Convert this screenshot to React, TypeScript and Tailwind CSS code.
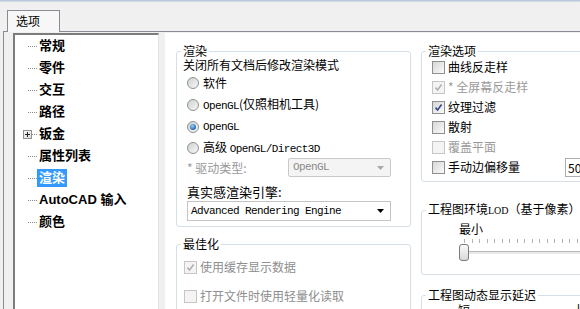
import React from "react";

const mono = "font-['Liberation_Mono',monospace] text-[11px] tracking-[-0.6px]";

function Radio({ checked }: { checked?: boolean }) {
  return (
    <span className="w-[12px] h-[12px] rounded-full border border-[#8e8f8f] bg-linear-to-br from-[#cfd0d0] to-[#f8f8f8] flex items-center justify-center shrink-0">
      {checked && (
        <span className="w-[6px] h-[6px] rounded-full bg-[radial-gradient(circle_at_40%_35%,#9fd0f7,#1b5ea8_75%)]" />
      )}
    </span>
  );
}

function Check({ checked, disabled }: { checked?: boolean; disabled?: boolean }) {
  return (
    <span
      className={`w-[13px] h-[13px] border flex items-center justify-center shrink-0 ${
        disabled
          ? "border-[#c6c6c6] bg-[#f4f4f4]"
          : "border-[#8e8f8f] bg-linear-to-br from-[#d6d6d6] to-[#fbfbfb]"
      }`}
    >
      {checked && (
        <svg width="9" height="9" viewBox="0 0 9 9">
          <path
            d="M1.5 4.6 L3.6 7 L7.6 1.6"
            stroke={disabled ? "#b0b0b0" : "#34488a"}
            strokeWidth="1.6"
            fill="none"
          />
        </svg>
      )}
    </span>
  );
}

const treeItems: { t: string; plus?: boolean; sel?: boolean }[] = [
  { t: "常规" },
  { t: "零件" },
  { t: "交互" },
  { t: "路径" },
  { t: "钣金", plus: true },
  { t: "属性列表" },
  { t: "渲染", sel: true },
  { t: "AutoCAD 输入" },
  { t: "颜色" },
];

function Tree() {
  return (
    <div className="w-[146px] shrink-0 bg-white border-t-2 border-l-2 border-[#7c7c7c] border-r border-r-[#e3e3e3] font-['Liberation_Sans','Noto_Sans_CJK_SC',sans-serif] font-bold text-[13px]">
      {treeItems.map((it) => (
        <div key={it.t} className="h-[22px] flex items-center">
          {it.plus ? (
            <>
              <span className="ml-[8px] w-[9px] h-[9px] border border-[#919191] bg-linear-to-br from-[#f4f4f4] to-[#dedede] flex items-center justify-center">
                <svg width="7" height="7" viewBox="0 0 7 7">
                  <path d="M1 3.5h5M3.5 1v5" stroke="#222" strokeWidth="1" />
                </svg>
              </span>
              <span className="w-[5px] border-t border-dotted border-[#8a8a8a]" />
            </>
          ) : (
            <span className="ml-[13px] w-[9px] border-t border-dotted border-[#8a8a8a]" />
          )}
          <span
            className={`px-[2px] h-[18px] leading-[18px] ${
              it.sel ? "bg-[#3399ff] text-white" : "text-black"
            }`}
          >
            {it.t}
          </span>
        </div>
      ))}
    </div>
  );
}

function Legend({ children }: { children: React.ReactNode }) {
  return (
    <legend className="ml-[4px] px-[2px] leading-[14px] text-[12px] whitespace-nowrap">{children}</legend>
  );
}

function LeftColumn() {
  return (
    <div className="w-[235px] shrink-0 flex flex-col">
      <fieldset className="mt-[11px] border border-[#d5dfe5] rounded-[3px] min-w-0">
        <Legend>渲染</Legend>
        <div className="pl-[6px] pb-[5px] flex flex-col">
          <div className="h-[14px] leading-[14px]">关闭所有文档后修改渲染模式</div>
          <div className="h-[22px] flex items-center pl-[4px] gap-[4px]">
            <Radio />
            <span>软件</span>
          </div>
          <div className="h-[22px] flex items-center pl-[4px] gap-[4px]">
            <Radio />
            <span>
              <span className={mono}>OpenGL</span>(仅照相机工具)
            </span>
          </div>
          <div className="h-[22px] flex items-center pl-[4px] gap-[4px]">
            <Radio checked />
            <span className={mono}>OpenGL</span>
          </div>
          <div className="h-[20px] flex items-center pl-[4px] gap-[4px]">
            <Radio />
            <span>
              高级 <span className={mono}>OpenGL/Direct3D</span>
            </span>
          </div>
          <div className="h-[19px] flex items-center pl-[4px]">
            <span className="w-[101px] text-[#9a9a9a]">* 驱动类型:</span>
            <div className="w-[103px] h-[19px] border border-[#c9c9c9] rounded-[2px] bg-[#f4f4f4] flex items-center pl-[4px] pr-[6px] text-[#8a8a8a]">
              <span className={mono}>OpenGL</span>
              <svg className="ml-auto" width="7" height="4" viewBox="0 0 7 4">
                <path d="M0 0h7L3.5 4z" fill="#a8a8a8" />
              </svg>
            </div>
          </div>
          <div className="mt-[7px] h-[16px] leading-[16px] text-[13px] pl-[4px]">真实感渲染引擎:</div>
          <div className="mt-[1px] ml-[4px] w-[204px] h-[20px] border border-[#c4c4c4] bg-white flex items-center pl-[3px] pr-[6px]">
            <span className={mono}>Advanced Rendering Engine</span>
            <svg className="ml-auto" width="7" height="4" viewBox="0 0 7 4">
              <path d="M0 0h7L3.5 4z" fill="#000" />
            </svg>
          </div>
        </div>
      </fieldset>

      <fieldset className="mt-[10px] border border-[#d5dfe5] rounded-[3px] min-w-0">
        <Legend>最佳化</Legend>
        <div className="pl-[7px] pb-[30px] flex flex-col">
          <div className="mt-[6px] h-[20px] flex items-center gap-[3px] text-[#8e8e8e]">
            <Check checked disabled />
            <span>使用缓存显示数据</span>
          </div>
          <div className="mt-[9px] h-[20px] flex items-center gap-[3px] text-[#8e8e8e]">
            <Check disabled />
            <span>打开文件时使用轻量化读取</span>
          </div>
        </div>
      </fieldset>
    </div>
  );
}

const ticks = Array.from({ length: 16 }, (_, i) => i);

function RightColumn() {
  return (
    <div className="w-[185px] shrink-0 flex flex-col">
      <fieldset className="mt-[11px] border border-[#d5dfe5] rounded-[3px] min-w-0">
        <Legend>渲染选项</Legend>
        <div className="pl-[10px] pb-[4px] flex flex-col">
          <div className="-mt-[1px] h-[20px] flex items-center gap-[3px]">
            <Check />
            <span>曲线反走样</span>
          </div>
          <div className="h-[20px] flex items-center gap-[3px] text-[#9a9a9a]">
            <Check checked disabled />
            <span>* 全屏幕反走样</span>
          </div>
          <div className="h-[20px] flex items-center gap-[3px]">
            <Check checked />
            <span>纹理过滤</span>
          </div>
          <div className="h-[20px] flex items-center gap-[3px]">
            <Check />
            <span>散射</span>
          </div>
          <div className="h-[20px] flex items-center gap-[3px] text-[#9a9a9a]">
            <Check disabled />
            <span>覆盖平面</span>
          </div>
          <div className="h-[20px] flex items-center gap-[3px]">
            <Check />
            <span className="w-[114px] shrink-0">手动边偏移量</span>
            <div className="w-[30px] h-[19px] shrink-0 border border-[#abadb3] bg-white pl-[2px] leading-[17px]">50</div>
          </div>
        </div>
      </fieldset>

      <fieldset className="mt-[20px] border border-[#d5dfe5] rounded-[3px] min-w-0">
        <Legend>
          工程图环境<span className="font-['Liberation_Serif',serif] text-[10px]">LOD</span>（基于像素）
        </Legend>
        <div className="pl-[37px] pb-[13px] flex flex-col">
          <div className="mt-[3px] h-[16px] leading-[16px]">最小</div>
          <div className="mt-[2px] h-[5px] flex items-start gap-[6.5px] pl-[5px]">
            {ticks.map((i) => (
              <span key={i} className="w-[1px] h-[4px] bg-[#b4b4b4] shrink-0" />
            ))}
          </div>
          <div className="relative h-[17px]">
            <div className="absolute left-[5px] right-0 top-[7px] h-[3px] border-t border-[#b9b9b9] bg-[#e8eaea]" />
            <div className="relative w-[10px] h-[17px] rounded-[3px] border border-[#7b7b7b] bg-linear-to-b from-[#fafafa] to-[#d9d9d9]" />
          </div>
        </div>
      </fieldset>

      <fieldset className="mt-[13px] border border-[#d5dfe5] rounded-[3px] min-w-0">
        <Legend>工程图动态显示延迟</Legend>
        <div className="pl-[36px] pb-[20px] h-[16px] leading-[16px] flex">
          <span>短</span>
          <span className="ml-[105px]">长</span>
        </div>
      </fieldset>
    </div>
  );
}

export default function App() {
  return (
    <div className="w-[580px] h-[309px] overflow-hidden bg-[#f0f0f0] flex flex-col font-['Noto_Sans_CJK_SC',sans-serif] text-[12px] text-black select-none">
      <div className="h-[2px] shrink-0 bg-linear-to-b from-[#aebfd3] to-[#d9e3ee]" />
      <div className="h-[30px] shrink-0 flex items-end">
        <div className="ml-[3px] w-[4px] h-[1px] bg-[#898c95]" />
        <div className="w-[53px] h-[22px] border-t border-l border-r border-[#898c95] bg-[#f7f7f7] pl-[8px] leading-[20px] text-[12px]">
          选项
        </div>
        <div className="flex-1 h-[1px] bg-[#898c95]" />
      </div>
      <div className="flex-1 min-h-0 ml-[3px] border-l border-[#898c95] flex pl-[9px] pt-[1px]">
        <Tree />
        <div className="ml-[6px] flex-1 bg-white flex pl-[11px] gap-[10px] overflow-hidden">
          <LeftColumn />
          <RightColumn />
        </div>
      </div>
    </div>
  );
}
